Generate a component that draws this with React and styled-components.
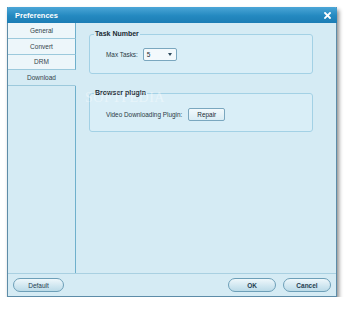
import styled, { createGlobalStyle } from 'styled-components'

const Global = createGlobalStyle`
	html, body {
		margin: 0;
		background: #ffffff;
	}
	body {
		padding: 7px 0 0 7px;
		font-family: "Liberation Sans", Arial, sans-serif;
	}
`

const Window = styled.div`
	position: relative;
	width: 330px;
	height: 290px;
	display: flex;
	flex-direction: column;
	background: #d5ebf4;
	border: 1px solid #5d8ca8;
	border-top: none;
	box-sizing: border-box;
	box-shadow: 2px 3px 4px rgba(0, 0, 0, 0.45);
`

const TitleBar = styled.div`
	height: 16px;
	margin: 0 -1px;
	display: flex;
	align-items: center;
	justify-content: space-between;
	padding: 0 6px 0 8px;
	background: linear-gradient(#4ba6d7, #2489c0 55%, #1c7db5);
	border-radius: 2px 2px 0 0;
	color: #ffffff;
	font-weight: bold;
	font-size: 7.5px;
`

const Main = styled.div`
	flex: 1;
	display: flex;
	min-height: 0;
`

const Sidebar = styled.div`
	width: 68px;
	display: flex;
	flex-direction: column;
`

const Tab = styled.div`
	height: 15.75px;
	box-sizing: border-box;
	display: flex;
	align-items: center;
	justify-content: center;
	font-size: 6.5px;
	color: #33434c;
	background: ${p => (p.$active ? '#d5ebf4' : '#edf6fa')};
	border-bottom: 1px solid #9cc9dc;
	border-right: 1px solid ${p => (p.$active ? 'transparent' : '#6fb0cc')};
`

const SideFill = styled.div`
	flex: 1;
	border-right: 1px solid #6fb0cc;
`

const Content = styled.div`
	position: relative;
	flex: 1;
	padding: 7px 23px 0 13px;
	display: flex;
	flex-direction: column;
	gap: 15px;
`

const Group = styled.fieldset`
	margin: 0;
	padding: ${p => p.$pad};
	border: 1px solid #a3d1e5;
	border-radius: 3px;
	background: #d9eef7;
	min-width: 0;
`

const Legend = styled.legend`
	padding: 0 1px;
	font-size: 7px;
	line-height: 8px;
	font-weight: bold;
	color: #1a2a33;
`

const Row = styled.div`
	display: flex;
	align-items: center;
	gap: 5px;
	padding-left: 12px;
	height: 13px;
	font-size: 6.4px;
	color: #2a3a44;
`

const Combo = styled.div`
	width: 34px;
	height: 13px;
	box-sizing: border-box;
	display: flex;
	align-items: center;
	justify-content: space-between;
	padding: 0 4px 0 3px;
	border: 1px solid #7aa7bf;
	border-radius: 2px;
	background: #f3f9fc;
	font-size: 6.5px;
	color: #1a2a33;
`

const Arrow = styled.span`
	width: 0;
	height: 0;
	border-left: 2.5px solid transparent;
	border-right: 2.5px solid transparent;
	border-top: 3px solid #2e4a5c;
`

const SmallButton = styled.button`
	width: 37px;
	height: 13px;
	margin-left: 1px;
	padding: 0;
	box-sizing: border-box;
	border: 1px solid #7aa7bf;
	border-radius: 2px;
	background: linear-gradient(#f2f9fc, #d9ecf4);
	font-family: inherit;
	font-size: 6.4px;
	color: #1a2a33;
`

const Footer = styled.div`
	height: 23px;
	box-sizing: border-box;
	border-top: 1px solid #a9d0e1;
	display: flex;
	align-items: center;
	gap: 7px;
	padding: 0 5px 0 5px;
`

const Pill = styled.button`
	width: ${p => p.$w}px;
	height: 14px;
	padding: 0;
	box-sizing: border-box;
	border: 1px solid #6d9fb8;
	border-radius: 7px;
	background: linear-gradient(#eef7fb, #cfe6f0 60%, #bcdbe8);
	font-family: inherit;
	font-size: 6.5px;
	font-weight: ${p => (p.$bold ? 'bold' : 'normal')};
	color: #1f3d50;
	&:first-child {
		margin-right: auto;
	}
`

const Watermark = styled.div`
	position: absolute;
	left: 9px;
	top: 67px;
	font-family: "Liberation Serif", serif;
	font-size: 14px;
	letter-spacing: 0.5px;
	color: rgba(255, 255, 255, 0.4);
	pointer-events: none;
`

const tabs = ['General', 'Convert', 'DRM', 'Download']

const CloseIcon = () => (
	<svg width="7" height="7" viewBox="0 0 7 7">
		<path d="M1 1 L6 6 M6 1 L1 6" stroke="#ffffff" strokeWidth="1.8" strokeLinecap="square" />
	</svg>
)

const App = () => {
	return (
		<>
			<Global />
			<Window>
				<TitleBar>
					<span>Preferences</span>
					<CloseIcon />
				</TitleBar>
				<Main>
					<Sidebar>
						{tabs.map(t => (
							<Tab key={t} $active={t === 'Download'}>{t}</Tab>
						))}
						<SideFill />
					</Sidebar>
					<Content>
						<Group $pad="0 4px 12px 4px">
							<Legend>Task Number</Legend>
							<Row style={{ marginTop: 10 }}>
								Max Tasks:
								<Combo>
									5
									<Arrow />
								</Combo>
							</Row>
						</Group>
						<Group $pad="0 4px 10px 4px">
							<Legend>Browser plugin</Legend>
							<Row style={{ marginTop: 11 }}>
								Video Downloading Plugin:
								<SmallButton>Repair</SmallButton>
							</Row>
						</Group>
						<Watermark>SOFTPEDIA</Watermark>
					</Content>
				</Main>
				<Footer>
					<Pill $w={51}>Default</Pill>
					<Pill $w={48} $bold>OK</Pill>
					<Pill $w={48} $bold>Cancel</Pill>
				</Footer>
			</Window>
		</>
	)
}

export default App
